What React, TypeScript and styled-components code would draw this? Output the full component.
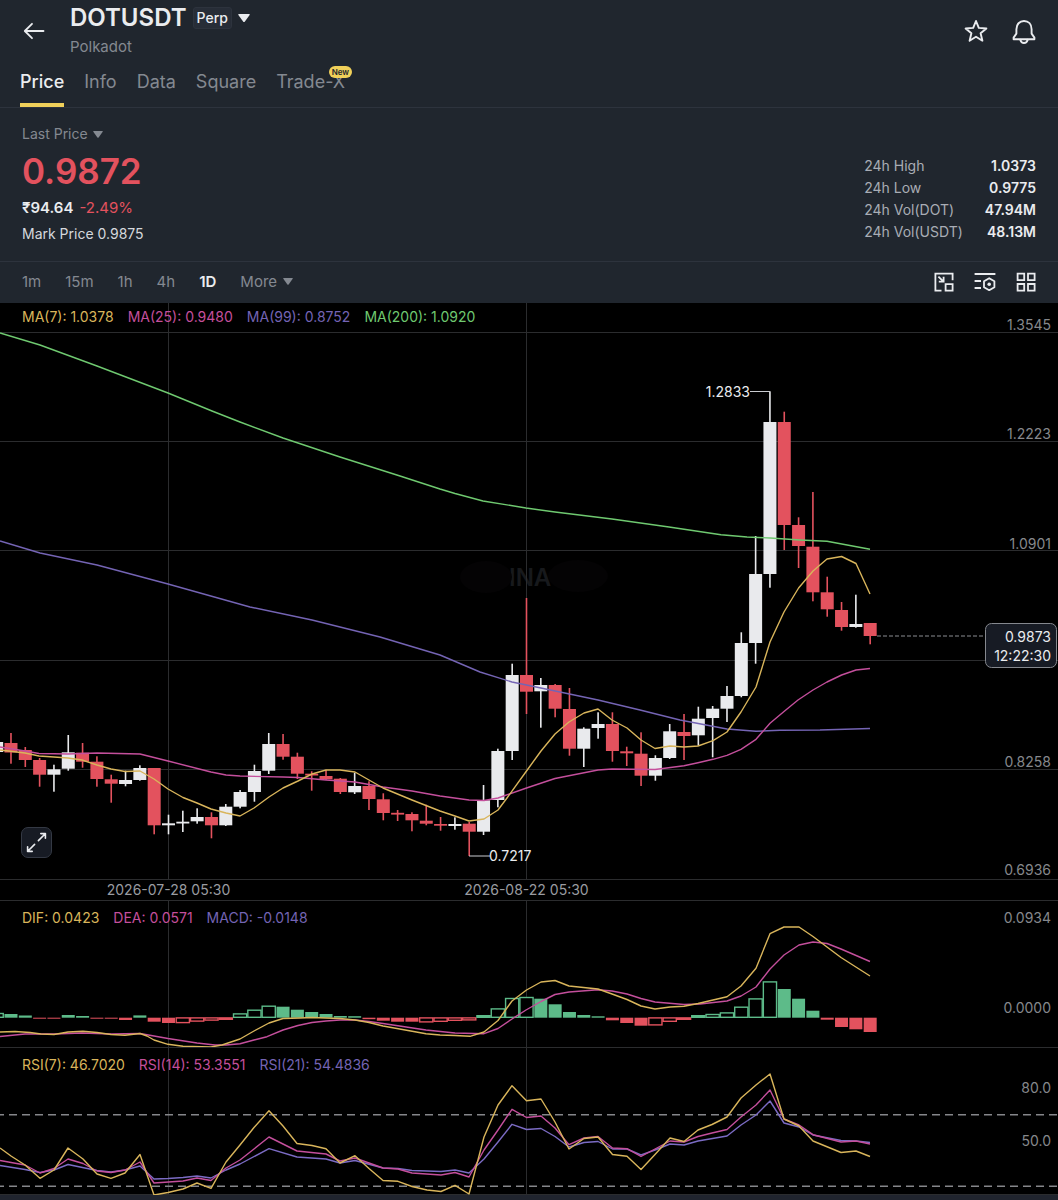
import React from "react";
import styled, { createGlobalStyle } from "styled-components";

/* ---------- palette ---------- */
const c = {
  panel: "#20262e",
  line: "#2d333d",
  grid: "#2b2c2e",
  text: "#eaecef",
  muted: "#848991",
  soft: "#a9adb5",
  axis: "#86888c",
  red: "#e3525e",
  green: "#5dbb89",
  candle: "#e9eaed",
  yellow: "#d9b55b",
  pink: "#c44f9c",
  violet: "#7464b4",
  lime: "#6fc970",
  gold: "#f0d05a",
};
const font = `Inter, "Liberation Sans", sans-serif`;

const Global = createGlobalStyle`
  * { box-sizing: border-box; }
  body { margin: 0; background: #20242e; font-family: ${font}; color: ${c.text}; }
  button { font: inherit; color: inherit; background: none; border: 0; padding: 0; margin: 0; cursor: pointer; }
  svg { display: block; }
`;

/* ---------- header ---------- */
const Page = styled.div`
  background: ${c.panel};
`;
const Header = styled.header`
  display: flex;
  align-items: center;
  height: 64px;
  padding: 0 22px 3px;
`;
const IconButton = styled.button`
  display: grid;
  place-items: center;
  width: 24px;
  height: 24px;
`;
const MarketButton = styled.button`
  display: grid;
  place-items: center;
  height: 24px;
`;
const TitleBlock = styled.div`
  flex: 1;
  margin-left: 24px;
`;
const TitleRow = styled.div`
  display: flex;
  align-items: center;
  gap: 6px;
`;
const Title = styled.h1`
  margin: 0;
  font-size: 24px;
  line-height: 28px;
  font-weight: 600;
`;
const Perp = styled.span`
  padding: 0 3px;
  border: 1px solid ${c.line};
  border-radius: 3px;
  background: #272d37;
  font-size: 14px;
  line-height: 20px;
  font-weight: 500;
`;
const Subtitle = styled.div`
  margin-top: 5px;
  font-size: 15px;
  line-height: 20px;
  color: ${c.muted};
`;
const HeaderActions = styled.div`
  display: flex;
  gap: 24px;
`;

const Tabs = styled.nav`
  display: flex;
  gap: 20px;
  padding: 0 20px;
  border-bottom: 1px solid ${c.line};
`;
const Tab = styled.a<{ $active?: boolean }>`
  position: relative;
  height: 43px;
  padding-top: 6px;
  border-bottom: 4px solid ${(p) => (p.$active ? c.gold : "transparent")};
  font-size: 18px;
  line-height: 24px;
  font-weight: ${(p) => (p.$active ? 500 : 400)};
  color: ${(p) => (p.$active ? c.text : c.muted)};
  text-decoration: none;
`;
const NewBadge = styled.span`
  position: absolute;
  top: 2px;
  right: -7px;
  padding: 0 3px;
  border-radius: 6px;
  background: ${c.gold};
  color: #20242e;
  font-size: 8px;
  line-height: 12px;
  font-weight: 600;
`;

/* ---------- price summary ---------- */
const Summary = styled.section`
  display: flex;
  justify-content: space-between;
  align-items: flex-end;
  height: 153px;
  padding: 0 22px 17px;
`;
const PriceType = styled.button`
  display: flex;
  align-items: center;
  gap: 5px;
  font-size: 14px;
  line-height: 20px;
  color: ${c.muted};
`;
const LastPrice = styled.div`
  margin: 6px 0;
  font-size: 35px;
  line-height: 42px;
  font-weight: 600;
  color: ${c.red};
`;
const FiatRow = styled.div`
  display: flex;
  gap: 6px;
  font-size: 15px;
  line-height: 20px;
  font-weight: 600;
`;
const Change = styled.span`
  font-weight: 400;
  color: ${c.red};
`;
const MarkPrice = styled.div`
  margin-top: 6px;
  font-size: 14px;
  line-height: 20px;
  color: #d5d8dd;
`;
const Stats = styled.dl`
  display: grid;
  grid-template-columns: auto auto;
  column-gap: 22px;
  margin: 0;
  padding-bottom: 1px;
  font-size: 14px;
  line-height: 22px;
`;
const StatName = styled.dt`
  color: ${c.soft};
`;
const StatValue = styled.dd`
  margin: 0;
  text-align: right;
  font-weight: 600;
`;

/* ---------- interval bar ---------- */
const Toolbar = styled.div`
  display: flex;
  align-items: center;
  justify-content: space-between;
  height: 42px;
  padding: 0 22px 2px;
  border-top: 1px solid ${c.line};
`;
const Intervals = styled.div`
  display: flex;
  gap: 24px;
`;
const Interval = styled.button<{ $active?: boolean }>`
  display: flex;
  align-items: center;
  gap: 6px;
  font-size: 15px;
  line-height: 20px;
  font-weight: ${(p) => (p.$active ? 600 : 400)};
  color: ${(p) => (p.$active ? c.text : c.muted)};
`;
const Tools = styled.div`
  display: flex;
  gap: 17px;
  margin-right: -2px;
`;

/* ---------- charts ---------- */
const Panel = styled.section`
  position: relative;
  background: #000;
`;
const Chart = styled.svg`
  width: 100%;
  height: auto;
  font-family: ${font};
  font-size: 14px;
  overflow: hidden;
`;
const Legend = styled.div<{ $top: number }>`
  position: absolute;
  top: ${(p) => p.$top}px;
  left: 22px;
  display: flex;
  gap: 14px;
  font-size: 14px;
  line-height: 20px;
`;
const LegendItem = styled.span<{ $color: string }>`
  color: ${(p) => p.$color};
`;
const ExpandButton = styled.button`
  position: absolute;
  left: 21px;
  bottom: 42px;
  display: grid;
  place-items: center;
  width: 31px;
  height: 31px;
  border: 1px solid #343944;
  border-radius: 7px;
  background: #171b24;
`;

const Caret = ({ size = 10 }: { size?: number }) => (
  <svg width={size} height={size * 0.7} viewBox="0 0 10 7" fill="currentColor">
    <path d="M0.6 0H9.4Q10 .2 9.7 .8L5.6 6.5Q5 7.2 4.4 6.5L.3 .8Q0 .2 .6 0Z" />
  </svg>
);

/* ---------- data: one entry for each day, in chart units ---------- */
const FIRST = -12;
const STEP = 14.32;
const xAt = (i: number) => 168.5 + STEP * i;

type Candle = [up: 0 | 1, high: number, top: number, bottom: number, low: number];
const candles: Candle[] = [
  [1, 742, 742, 752, 752], [0, 733, 743, 752.5, 763.7], [0, 747, 750, 760, 767], [0, 758, 760, 774.7, 786.7],
  [1, 764.7, 769.3, 774.7, 791.7], [1, 735, 752.3, 768.7, 770.7], [0, 743, 752.7, 761.7, 767.7], [0, 756.3, 761.7, 779, 786.7],
  [0, 774.7, 779.3, 783.7, 802.7], [1, 770.7, 780, 784, 786.3], [1, 765.3, 768, 780, 780.7], [0, 768, 768, 825.3, 834.3],
  [1, 814.7, 823.3, 825.3, 834.3], [1, 810.7, 821.7, 823.5, 832], [1, 808.3, 817, 821.3, 823.7], [0, 812.3, 817, 825.3, 838.3],
  [1, 804, 806.7, 825.3, 826], [1, 790, 792, 806.7, 808.3], [1, 764.7, 771, 792, 801.7], [1, 733, 744, 770.7, 774],
  [0, 734, 744, 756.7, 759.7], [0, 752.7, 756.7, 773.7, 779], [0, 771.3, 773.7, 775.5, 790.7], [0, 770, 776, 779.3, 780],
  [0, 778, 778.7, 792, 794], [1, 772.7, 786, 792.3, 794], [0, 781.3, 786, 799, 810], [0, 793.3, 799.3, 813, 820.3],
  [0, 810, 812.8, 814.6, 821], [0, 812.3, 814, 820.3, 831.3], [0, 804.7, 820.7, 823.7, 825.3], [0, 817, 824, 825.7, 830.7],
  [1, 817.3, 824, 826, 829.7], [0, 822, 823.7, 831.7, 856], [1, 785, 800.3, 831.7, 835], [1, 748.7, 751, 800, 807.3],
  [1, 663.7, 675, 751, 760], [0, 598, 675, 691.7, 714], [1, 678, 685, 691.3, 727.7], [0, 684, 685, 708.7, 717.3],
  [0, 688, 709, 748.7, 755.7], [1, 727.3, 728.7, 748.7, 767], [1, 712.3, 724, 728, 738.7], [0, 712.3, 724, 751, 761.7],
  [0, 746.7, 751.3, 753.3, 766], [0, 732.3, 753.7, 775.7, 786], [1, 755.3, 758, 775.7, 780.7], [1, 724, 731.3, 758, 759],
  [0, 714, 732, 736, 760], [1, 706.7, 718.7, 735.3, 745.7], [1, 706, 708.7, 718, 757.3], [1, 686, 696, 708.7, 722],
  [1, 632.3, 643, 696, 697.3], [1, 536, 574, 643, 663.7], [1, 391.3, 422, 574, 587.7], [0, 411.7, 422, 525, 550],
  [0, 517.3, 525, 546, 568], [0, 492, 546.7, 592.3, 601.3], [0, 576.7, 592.3, 609.3, 616.7], [0, 602, 610, 627, 630.7],
  [1, 594.7, 624, 627, 627.7], [0, 623, 623, 636, 644.3],
];

/* MACD histogram: height above (+) or below (-) the zero line, and whether the bar is hollow */
const bars: [number, (0 | 1)?][] = [
  [4.4, 1], [3.7], [2.2], [-1], [-1], [2.7], [1.7], [-1], [-1], [-2.3], [2.3], [-4], [-5.3],
  [-5.3, 1], [-3.8, 1], [-2.8, 1], [-2, 1], [4, 1], [7.7, 1], [11.7, 1], [11], [8], [5.7], [3.7], [1.7], [1.5],
  [-1.5], [-3], [-4], [-4], [-4.6, 1], [-4, 1], [-3, 1], [-2.6, 1], [2.2, 1], [9, 1], [19.4, 1], [20.4, 1],
  [19], [13.4], [5.7], [2.7], [1.4], [-2.6], [-5.3], [-8], [-7.6, 1], [-4, 1], [-2, 1], [2.2, 1], [3.4, 1],
  [5, 1], [10.7, 1], [19, 1], [36, 1], [28.7], [19], [7], [-2], [-9.3], [-11.6], [-14.3],
];

const ma7 =
  "0,750 25,753 39,756 54,757 68,758 82,760 97,765 111,769 125,771.5 140,771 154,779 168,789 183,797.5 197,803 211,809 226,813 240,816 254,808 269,797 283,788 298,781 312,774 326,770 340,770 355,772 369,780 383,788 412,800 440,811 455,816 469,821 484,819 498,810 507,798 526.5,771 541,751 555,734 569,722 584,713 598,709 612,720 627,728 641,740 655,748.5 670,746 684,747 698,746 713,740.7 727,732 741,712 756,687 770,642 784,612 798.6,588 813,571 827,559 841.6,556.5 856,563.5 870,594";
const ma25 =
  "0,747 25,751 39,753.5 68,754 97,753 140,754 168,761 211,772 226,775 240,776 283,777 298,777.5 326,780 355,782 383,787 412,791 440,796 469,800 484,800.5 498,798 526.5,788 555,778.5 598,770 612,769 655,769.5 684,765.7 698,762.7 713,759.3 727,755.3 741,749.3 756,739.3 770,723.3 784,711.5 798,700 813,690 827,682 841.6,675 856,670 870,668.5";
const ma99 =
  "0,541 40,553 97,565 168,584 250,607 312,620 380,637 440,655 480,672 512,682 526.5,685 560,692 598,700 640,710 680,720 727,729 756,731.3 780,730.3 820,730 870,728.5";
const ma200 =
  "0,333 40,345 97,366 168,393 212,411 240,422 283,438 340,457 400,476 440,489 455,493.5 483,501 526,508 555,512 612,519 669,527 721,534.7 747,537 770,538 800,540 827,541.3 870,549.3";
const dif =
  "0,1032 15,1031.5 30,1032.5 41,1034 54,1034.5 68,1032 83,1031.3 97,1032.5 111,1034.5 125,1035.3 140,1033.5 147,1036 154,1040 168,1044.3 183,1046.3 211,1047 222,1045 240,1039 254,1031 269,1023 283,1018.5 300,1018 312,1017.5 326,1018 340,1018.5 355,1020 369,1022.5 383,1026 426,1033.7 440,1035 455,1035.5 470,1036.3 484,1032 498,1020.5 512,1001 526.5,990 541,982 555,980.5 569,986 598,989 612,994 627,999.5 641,1006 655,1009 670,1007 684,1006.3 698,1003.5 727,996.7 741,986 756,968.3 770,933.7 784,927 799,927 813,936.5 827,947 841,957.5 870,976";
const dea =
  "0,1036.5 25,1034 54,1034 82,1033 111,1034 140,1033.5 168,1038.5 197,1043 215,1045 226,1045 240,1043.7 254,1040 267,1036.7 283,1030 298,1025.5 312,1022.5 326,1021 340,1020 355,1020 369,1021.5 383,1023.5 426,1030 455,1033 484,1033.7 498,1028.5 512,1019 526,1010 541,1001.5 555,994.5 569,992 598,989.7 612,991 627,994 641,998.5 655,1002 684,1004.5 700,1004 727,1001 741,996 756,987 770,969 784,955 799,945 813,942 827,943.5 841,949 870,961.5";
const rsi7 =
  "0,1148 11,1156 25,1165 40,1178.3 54,1170 68,1148 83,1159 97,1174 111,1178.3 125,1173 140,1154.5 154,1195 168,1192.5 183,1189 197,1183 211,1188.3 226,1162 240,1145 254,1127.5 269,1110.7 283,1126 297,1143.5 312,1145.5 326,1148.7 340,1163 355,1155.7 369,1168.5 383,1180.5 398,1181.3 412,1186.5 427,1190 441,1191.5 455,1185.3 469,1194 484,1137 498,1105 512,1085.7 526.5,1100.7 541,1099 555,1122 569,1149 584,1138.5 598,1137 612.5,1154.5 627,1156.3 641,1169.5 655,1154.5 670,1138 684,1141.5 698,1130 712,1124.5 727,1117 741,1098 756,1085 770,1074 784,1119 799,1126 813,1141 841,1152.5 856,1151 870,1156.5";
const rsi14 =
  "0,1160.5 25,1165 40,1173 54,1168.5 68,1159 83,1163.5 97,1171 111,1172.5 125,1170 140,1162 154,1183 183,1181 197,1178 211,1180.5 226,1168 240,1160 254,1149 269,1137 283,1144 297,1151 326,1154 340,1161 355,1158 383,1168 398,1169 412,1173 441,1175 455,1172.5 469,1177 484,1150 498,1130 512,1109.3 526.5,1117.5 541,1116 555,1128 569,1144.7 584,1138 598,1136.5 612.5,1148 627,1148.7 641,1156.5 655,1149 670,1141 684,1142 698,1136.5 712,1133 727,1129.5 741,1117 756,1105 770,1090 784,1119 799,1125 813,1134.7 841,1142 856,1141 870,1144";
const rsi21 =
  "0,1165.5 25,1169.5 40,1172.5 54,1170 68,1164.5 97,1170.5 111,1172 125,1170 140,1166 154,1179 168,1178.5 183,1177.5 197,1176 211,1178 226,1170 240,1164 269,1148.7 297,1157 326,1159 340,1163 355,1160.5 383,1168 398,1168.5 412,1170.5 441,1171.5 455,1170 469,1173 484,1159 498,1142 512,1124.3 526.5,1129.5 541,1128.5 555,1136.5 569,1147 584,1142.5 598,1141.5 612.5,1149 627,1149 641,1155 655,1150 670,1144 684,1145 698,1141 727,1136 741,1125 756,1115 770,1101 784,1123 799,1127 813,1135 841,1140.5 856,1141 870,1142.5";

const Line = ({ points, color }: { points: string; color: string }) => (
  <polyline points={points} fill="none" stroke={color} strokeWidth="1.4" strokeLinejoin="round" />
);

const VerticalGrid = ({ from, to }: { from: number; to: number }) => (
  <path d={`M168.5 ${from}V${to}M526.5 ${from}V${to}`} stroke={c.grid} />
);

const AxisLabels = ({ items }: { items: [string, number][] }) => (
  <g fill={c.axis} textAnchor="end">
    {items.map(([label, y]) => (
      <text key={label} x="1051" y={y}>
        {label}
      </text>
    ))}
  </g>
);

const ZERO = 1017.7;

const PriceChart = () => (
  <Chart viewBox="0 303 1058 597" role="img" aria-label="DOTUSDT daily candles">
    <g>
      <text x="509" y="586" fontSize="24" fontWeight="600" fill="#17191c">
        INA
      </text>
      <ellipse cx="486" cy="577" rx="26" ry="16" fill="#040304" />
      <ellipse cx="578" cy="576" rx="30" ry="16" fill="#040304" />
    </g>
    <path d="M0 332.5H1058M0 441.5H1058M0 550.5H1058M0 660.5H1058M0 769.5H1058M0 879.5H1058" stroke={c.grid} />
    <VerticalGrid from={303} to={879} />
    {candles.map(([up, high, top, bottom, low], n) => {
      const x = xAt(n + FIRST);
      return (
        <g key={n} fill={up ? c.candle : c.red}>
          <rect x={x - 0.8} y={high} width="1.6" height={low - high} />
          <rect x={x - 6.5} y={top} width="13" height={bottom - top} />
        </g>
      );
    })}
    <Line points={ma200} color={c.lime} />
    <Line points={ma99} color={c.violet} />
    <Line points={ma25} color={c.pink} />
    <Line points={ma7} color={c.yellow} />
    <path d="M750 391.5H770M469 856H490" stroke="#c9cbd0" fill="none" />
    <g fill={c.text}>
      <text x="750" y="397" textAnchor="end">
        1.2833
      </text>
      <text x="489" y="861">
        0.7217
      </text>
    </g>
    <AxisLabels
      items={[
        ["1.3545", 330],
        ["1.2223", 439],
        ["1.0901", 549],
        ["0.8258", 767],
        ["0.6936", 875],
      ]}
    />
    <path d="M877 636H985" stroke="#8b8d92" strokeDasharray="4 2" />
    <rect x="985.5" y="623.5" width="71" height="44" rx="6" fill="#171b24" stroke="#85888e" />
    <g fill={c.text} textAnchor="end">
      <text x="1051" y="642">
        0.9873
      </text>
      <text x="1051" y="661">
        12:22:30
      </text>
    </g>
    <g fill="#9a9ca1" textAnchor="middle">
      <text x="168.5" y="895">
        2026-07-28 05:30
      </text>
      <text x="526.5" y="895">
        2026-08-22 05:30
      </text>
    </g>
  </Chart>
);

const MacdChart = () => (
  <Chart viewBox="0 900 1058 147" role="img" aria-label="MACD">
    <path d="M0 900.5H1058" stroke={c.grid} />
    <VerticalGrid from={901} to={1047} />
    {bars.map(([value, hollow], n) => {
      const x = xAt(n + FIRST);
      const h = Math.abs(value);
      const y = value > 0 ? ZERO - h : ZERO;
      const color = value > 0 ? c.green : c.red;
      return hollow ? (
        <rect
          key={n}
          x={x - 6.6}
          y={y + 0.2}
          width="13.2"
          height={Math.max(h - 0.6, 1)}
          fill={h > 2.5 ? "#000" : color}
          stroke={color}
          strokeWidth="1.4"
        />
      ) : (
        <rect key={n} x={x - 6.5} y={y} width="13" height={h} fill={color} />
      );
    })}
    <Line points={dea} color={c.pink} />
    <Line points={dif} color={c.yellow} />
    <AxisLabels
      items={[
        ["0.0934", 923],
        ["0.0000", 1013],
      ]}
    />
  </Chart>
);

const RsiChart = () => (
  <Chart viewBox="0 1047 1058 148" role="img" aria-label="RSI">
    <path d="M0 1047.5H1058M0 1194.5H1058" stroke={c.grid} />
    <VerticalGrid from={1048} to={1195} />
    <path d="M-4 1114.8H1058M-4 1186.2H1058" stroke="#85868a" strokeWidth="1.4" strokeDasharray="8 5" />
    <Line points={rsi21} color="#7b6bc4" />
    <Line points={rsi14} color={c.pink} />
    <Line points={rsi7} color={c.yellow} />
    <AxisLabels
      items={[
        ["80.0", 1093],
        ["50.0", 1146],
      ]}
    />
  </Chart>
);

const stats = [
  ["24h High", "1.0373"],
  ["24h Low", "0.9775"],
  ["24h Vol(DOT)", "47.94M"],
  ["24h Vol(USDT)", "48.13M"],
];

const stroke = { fill: "none", stroke: c.text, strokeLinejoin: "round", strokeLinecap: "round" } as const;

export default function App() {
  return (
    <Page>
      <Global />
      <Header>
        <IconButton aria-label="Back">
          <svg width="24" height="24" viewBox="0 0 24 24" {...stroke} strokeWidth="1.8">
            <path d="M3 12H21.5M10 4.8L2.8 12L10 19.2" />
          </svg>
        </IconButton>
        <TitleBlock>
          <TitleRow>
            <Title>DOTUSDT</Title>
            <Perp>Perp</Perp>
            <MarketButton aria-label="Choose market">
              <Caret size={12} />
            </MarketButton>
          </TitleRow>
          <Subtitle>Polkadot</Subtitle>
        </TitleBlock>
        <HeaderActions>
          <IconButton aria-label="Favourite">
            <svg width="24" height="24" viewBox="0 0 24 24" {...stroke} strokeWidth="1.9">
              <path d="M12 2L14.8 8.9L22.4 9.5L16.6 14.3L18.4 21.7L12 17.8L5.6 21.7L7.4 14.3L1.6 9.5L9.2 8.9Z" />
            </svg>
          </IconButton>
          <IconButton aria-label="Alerts">
            <svg width="24" height="26" viewBox="0 0 24 26" {...stroke} strokeWidth="1.9">
              <path d="M4.4 10.2C4.4 5.2 7.6 2 12 2C16.4 2 19.6 5.2 19.6 10.2V14.6L22.4 18.6V20.2H1.6V18.6L4.4 14.6Z" />
              <path d="M8.3 20.8C8.9 23 10.2 24 12 24C13.8 24 15.1 23 15.7 20.8" />
            </svg>
          </IconButton>
        </HeaderActions>
      </Header>

      <Tabs>
        <Tab href="#price" $active>Price</Tab>
        <Tab href="#info">Info</Tab>
        <Tab href="#data">Data</Tab>
        <Tab href="#square">Square</Tab>
        <Tab href="#trade-x">
          Trade-X
          <NewBadge>New</NewBadge>
        </Tab>
      </Tabs>

      <Summary>
        <div>
          <PriceType>
            Last Price <Caret />
          </PriceType>
          <LastPrice>0.9872</LastPrice>
          <FiatRow>
            ₹94.64 <Change>-2.49%</Change>
          </FiatRow>
          <MarkPrice>Mark Price 0.9875</MarkPrice>
        </div>
        <Stats>
          {stats.map(([name, value]) => (
            <React.Fragment key={name}>
              <StatName>{name}</StatName>
              <StatValue>{value}</StatValue>
            </React.Fragment>
          ))}
        </Stats>
      </Summary>

      <Toolbar>
        <Intervals>
          <Interval>1m</Interval>
          <Interval>15m</Interval>
          <Interval>1h</Interval>
          <Interval>4h</Interval>
          <Interval $active>1D</Interval>
          <Interval>
            More <Caret />
          </Interval>
        </Intervals>
        <Tools>
          <IconButton aria-label="Floating window">
            <svg width="24" height="24" viewBox="0 0 24 24" fill="none" stroke={c.text} strokeWidth="1.8">
              <path d="M9.5 20.6H3.4V3.6H20.6V10.2" />
              <path d="M13.6 14.2H20.6V20.6H13.6Z" />
              <path d="M6.4 6.6L11 11.2M11.6 6.8V11.7H6.8" />
            </svg>
          </IconButton>
          <IconButton aria-label="Indicator settings">
            <svg width="24" height="24" viewBox="0 0 24 24" fill="none" stroke={c.text} strokeWidth="1.8">
              <path d="M1.6 4H22.4M1.6 11H8M1.6 18H8" />
              <path d="M16.2 8.2L21.4 11.2V17.2L16.2 20.2L11 17.2V11.2Z" strokeLinejoin="round" />
              <circle cx="16.2" cy="14.2" r="1.8" fill={c.text} stroke="none" />
            </svg>
          </IconButton>
          <IconButton aria-label="Layout">
            <svg width="24" height="24" viewBox="0 0 24 24" fill="none" stroke={c.text} strokeWidth="1.8">
              <path d="M3.6 3.6H10.2V10.2H3.6ZM14 3.6H20.6V10.2H14ZM3.6 14H10.2V20.6H3.6ZM14 14H20.6V20.6H14Z" />
            </svg>
          </IconButton>
        </Tools>
      </Toolbar>

      <Panel>
        <PriceChart />
        <Legend $top={4}>
          <LegendItem $color={c.yellow}>MA(7): 1.0378</LegendItem>
          <LegendItem $color={c.pink}>MA(25): 0.9480</LegendItem>
          <LegendItem $color={c.violet}>MA(99): 0.8752</LegendItem>
          <LegendItem $color={c.lime}>MA(200): 1.0920</LegendItem>
        </Legend>
        <ExpandButton aria-label="Full screen">
          <svg width="21" height="21" viewBox="0 0 21 21" {...stroke} strokeWidth="1.6">
            <path d="M12.4 8.6L19 2M14.8 1.6H19.4V6.2M8.6 12.4L2 19M6.2 19.4H1.6V14.8" />
          </svg>
        </ExpandButton>
      </Panel>
      <Panel>
        <MacdChart />
        <Legend $top={8}>
          <LegendItem $color={c.yellow}>DIF: 0.0423</LegendItem>
          <LegendItem $color={c.pink}>DEA: 0.0571</LegendItem>
          <LegendItem $color={c.violet}>MACD: -0.0148</LegendItem>
        </Legend>
      </Panel>
      <Panel>
        <RsiChart />
        <Legend $top={8}>
          <LegendItem $color={c.yellow}>RSI(7): 46.7020</LegendItem>
          <LegendItem $color={c.pink}>RSI(14): 53.3551</LegendItem>
          <LegendItem $color={c.violet}>RSI(21): 54.4836</LegendItem>
        </Legend>
      </Panel>
    </Page>
  );
}
